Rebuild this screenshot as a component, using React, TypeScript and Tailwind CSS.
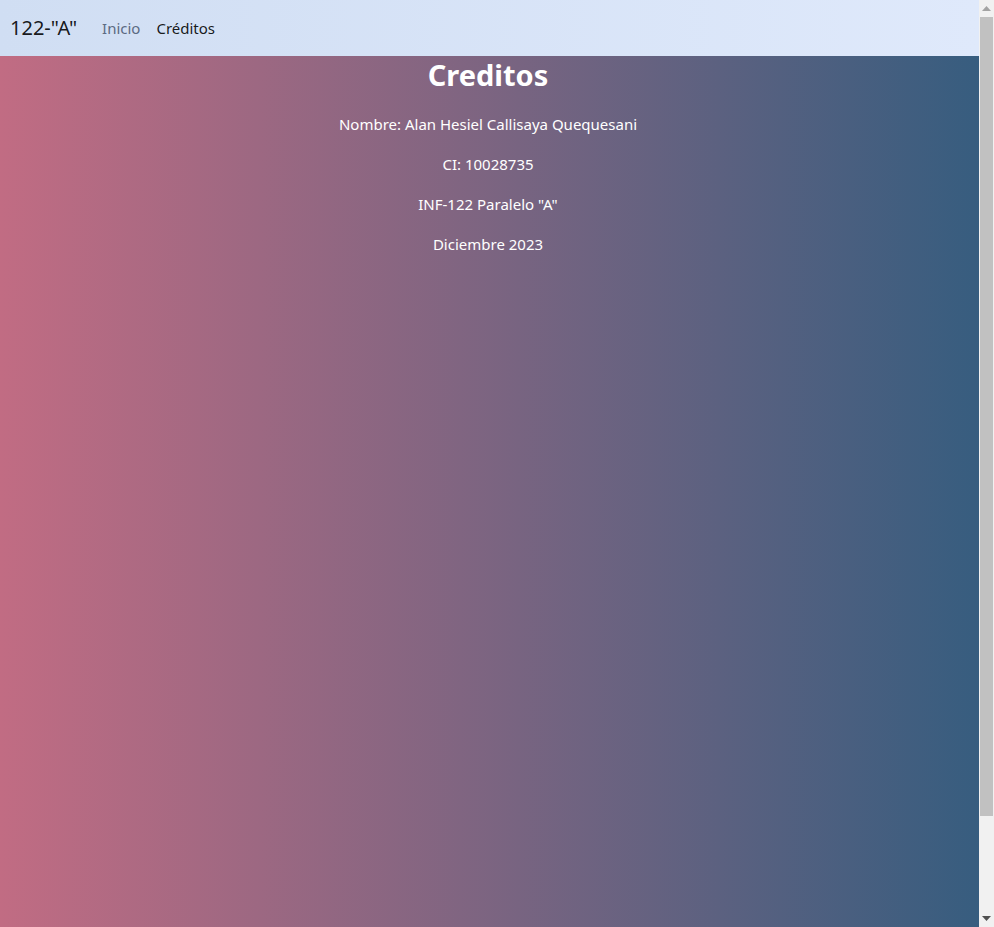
import React from "react";

export default function App() {
  return (
    <div className="h-[927px] flex overflow-hidden" style={{ fontFamily: '"Noto Sans", "Open Sans", sans-serif' }}>
      <div className="w-[979px] flex flex-col bg-[linear-gradient(to_right,#c16c83,#375d7f)]">
        <nav className="h-[56px] shrink-0 flex items-center px-[10px] bg-[linear-gradient(to_right,#d0def3,#dfe9fb)]">
          <span className="text-[20px] text-black/90 mr-[25px]">122-"A"</span>
          <a className="text-[15px] text-[#5b6a82] mr-[16px]">Inicio</a>
          <a className="text-[15px] text-black/90">Créditos</a>
        </nav>
        <main className="flex flex-col items-center text-white pt-[1px] pr-[3px]">
          <h1 className="text-[29px] font-bold leading-[36px] mb-[19px]">Creditos</h1>
          <p className="text-[15px] leading-[24px] mb-[16px]">Nombre: Alan Hesiel Callisaya Quequesani</p>
          <p className="text-[15px] leading-[24px] mb-[16px]">CI: 10028735</p>
          <p className="text-[15px] leading-[24px] mb-[16px]">INF-122 Paralelo "A"</p>
          <p className="text-[15px] leading-[24px] mb-[16px]">Diciembre 2023</p>
        </main>
      </div>
      <div className="w-[15px] flex flex-col items-center bg-[#f1f1f1]">
        <div className="h-[17px] w-full flex items-center justify-center">
          <svg width="9" height="5" viewBox="0 0 9 5"><path d="M4.5 0L9 5H0z" fill="#a3a3a3" /></svg>
        </div>
        <div className="w-[13px] h-[799px] bg-[#c1c1c1]" />
        <div className="flex-1" />
        <div className="h-[17px] w-full flex items-center justify-center">
          <svg width="9" height="5" viewBox="0 0 9 5"><path d="M0 0H9L4.5 5z" fill="#505050" /></svg>
        </div>
      </div>
    </div>
  );
}
